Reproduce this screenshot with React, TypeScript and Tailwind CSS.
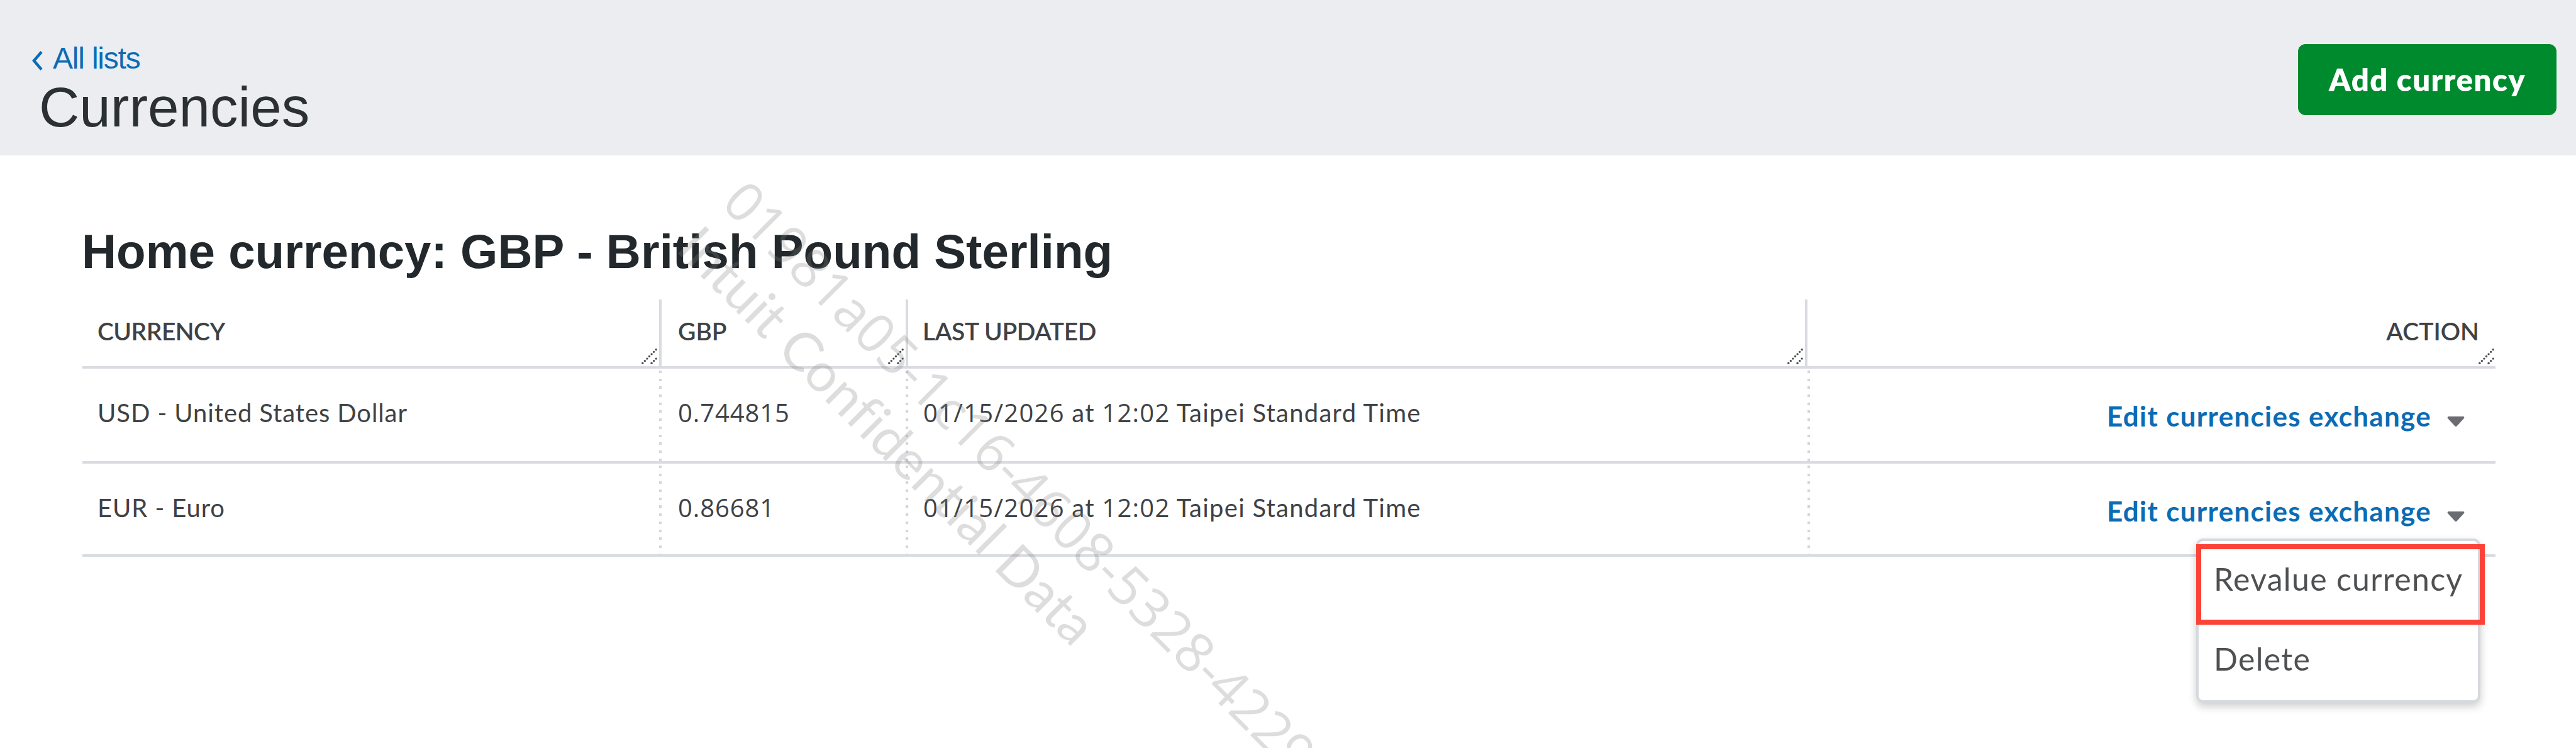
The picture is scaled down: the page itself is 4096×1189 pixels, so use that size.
import React from 'react';
import clsx from 'clsx';

interface Currency {
  code: string;
  name: string;
  rate: string;
  date: string;
  time: string;
  zone: string;
}

const currencies: Currency[] = [
  { code: 'USD', name: 'United States Dollar', rate: '0.744815', date: '01/15/2026', time: '12:02', zone: 'Taipei Standard Time' },
  { code: 'EUR', name: 'Euro', rate: '0.86681', date: '01/15/2026', time: '12:02', zone: 'Taipei Standard Time' },
];

const ResizeGrip = ({ className }: { className?: string }) => (
  <svg viewBox="0 0 25.2 25.2" className={clsx('absolute bottom-[3px] h-[25px] w-[25px] fill-[#4d4d4d]', className)}>
    {[0, 1, 2, 3, 4, 5, 6].map(i => (
      <circle key={i} cx={1.8 + i * 3.6} cy={23.4 - i * 3.6} r="1.7" />
    ))}
    {[0, 1, 2].map(i => (
      <circle key={i} cx={16.2 + i * 3.6} cy={23.4 - i * 3.6} r="1.7" />
    ))}
  </svg>
);

const DottedLine = () => (
  <div className="absolute top-[3px] right-0 bottom-0 w-[4px] bg-[repeating-linear-gradient(to_bottom,#d3d6db_0px,#d3d6db_4px,transparent_4px,transparent_12.7px)]" />
);

const Digits = ({ children }: { children: React.ReactNode }) => (
  <span className="font-['Open_Sans',sans-serif]">{children}</span>
);

const ActionMenu = () => (
  <>
    <div className="absolute top-[119px] right-[24px] h-[261px] w-[452px] rounded-[11px] border-4 border-[#d6d9de] bg-white pt-[30px] pl-[24px] text-[50px] leading-[60px] tracking-[1.3px] text-[#4f5052] shadow-[0_6px_14px_rgba(0,0,0,0.2)]">
      <div className="h-[127px]">Revalue currency</div>
      <div>Delete</div>
    </div>
    <div className="absolute top-[128px] right-[17px] h-[128px] w-[459px] border-8 border-[#fb4338]" />
  </>
);

const Watermark = () => (
  <div className="pointer-events-none absolute top-[266px] left-[1204px] origin-top-left rotate-45 text-[86px] leading-[102px] whitespace-nowrap text-[rgba(128,128,128,0.27)]">
    <div className="font-['Open_Sans',sans-serif] tracking-[0.2px]">01981a05-1c16-4608-5328-4229</div>
    <div className="tracking-[0.5px]">Intuit Confidential Data</div>
  </div>
);

export default function App() {
  return (
    <div className="relative h-[1189px] w-[4096px] overflow-hidden bg-white font-['Lato',sans-serif] text-[#3f4245]">
      <header className="flex h-[247px] items-start justify-between bg-[#ecedf1] pr-[31px] font-['Liberation_Sans',sans-serif]">
        <div className="pt-[65px]">
          <a className="flex items-center pl-[50px] text-[48px] leading-[56px] tracking-[-1.2px] text-[#0b6cb5]">
            <svg viewBox="0 0 18 31" className="mt-[6px] mr-[16px] h-[31px] w-[18px] fill-none stroke-current stroke-[4.5]">
              <path d="M16 1.5 4 15.5 16 29.5" />
            </svg>
            All lists
          </a>
          <h1 className="pl-[62px] text-[89px] leading-[98px] text-[#2a3034]">Currencies</h1>
        </div>
        <button className="mt-[70px] h-[113px] w-[411px] rounded-[12px] bg-[#008a2e] font-['Lato',sans-serif] text-[49px] font-extrabold tracking-[1.5px] text-white">
          Add currency
        </button>
      </header>

      <main className="pt-[109px] pl-[131px]">
        <h2 className="-ml-[1px] font-['Liberation_Sans',sans-serif] text-[76.3px] leading-[88px] font-bold text-[#22282b]">
          Home currency: GBP - British Pound Sterling
        </h2>

        <div className="mt-[32px] w-[3837px] text-[40px] leading-[48px] tracking-[0.9px]">
          <div className="grid h-[110px] grid-cols-[921px_392px_1430px_1fr] border-b-4 border-[#d8dbe0] text-[39px] font-semibold tracking-normal">
            <div className="relative border-r-4 border-[#d8dbe0] pt-[26px] pl-[24px] tracking-[-0.6px]">
              CURRENCY
              <ResizeGrip className="right-[3px]" />
            </div>
            <div className="relative border-r-4 border-[#d8dbe0] pt-[26px] pl-[26px]">
              GBP
              <ResizeGrip className="right-[3px]" />
            </div>
            <div className="relative border-r-4 border-[#d8dbe0] pt-[26px] pl-[23px] tracking-[-0.4px]">
              LAST UPDATED
              <ResizeGrip className="right-[3px]" />
            </div>
            <div className="relative pt-[26px] pr-[26px] text-right">
              ACTION
              <ResizeGrip className="right-[2px]" />
            </div>
          </div>

          {currencies.map((c, i) => (
            <div
              key={c.code}
              className={clsx('grid grid-cols-[921px_392px_1434px_1fr] border-b-4 border-[#d8dbe0]', i === 0 ? 'h-[151px]' : 'h-[148px]')}
            >
              <div className="relative pt-[46px] pl-[24px]">
                {c.code} - {c.name}
                <DottedLine />
              </div>
              <div className="relative pt-[46px] pl-[26px]">
                <Digits>{c.rate}</Digits>
                <DottedLine />
              </div>
              <div className="relative pt-[46px] pl-[24px] tracking-[1.25px]">
                <Digits>{c.date}</Digits> at <Digits>{c.time}</Digits> {c.zone}
                <DottedLine />
              </div>
              <div className="relative pt-[49px]">
                <div className="flex items-center justify-end gap-[25px] pr-[49px]">
                  <span className="text-[44px] leading-[52px] font-bold tracking-[1.3px] text-[#0b6cb5]">Edit currencies exchange</span>
                  <svg viewBox="0 0 30 17" className="mt-[17px] h-[16px] w-[28px] fill-[#6b6c72]">
                    <path d="M2 0H28Q30 1 29 3L17 16Q15 18 13 16L1 3Q0 1 2 0Z" />
                  </svg>
                </div>
                {c.code === 'EUR' && <ActionMenu />}
              </div>
            </div>
          ))}
        </div>
      </main>

      <Watermark />
    </div>
  );
}
